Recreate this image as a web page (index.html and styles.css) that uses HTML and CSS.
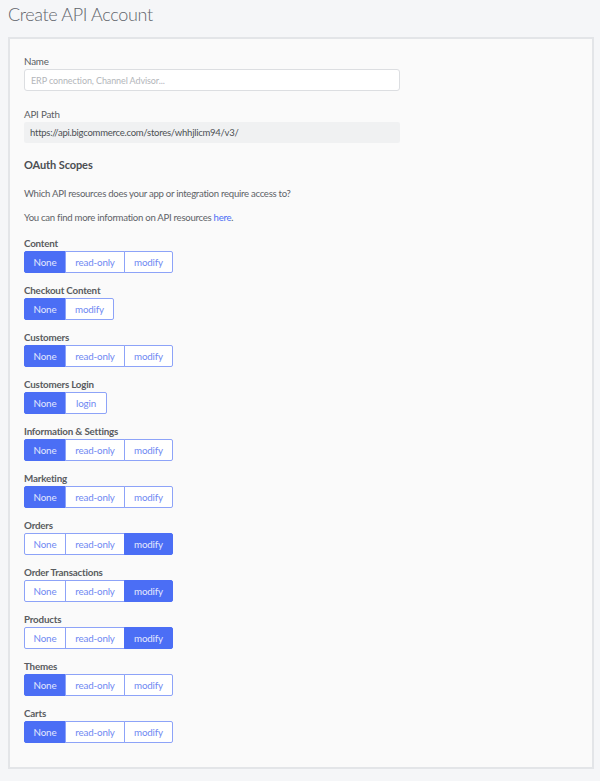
FILE: index.html
```html
<!DOCTYPE html>
<html>
<head>
<meta charset="utf-8">
<link rel="stylesheet" href="styles.css">
</head>
<body>
<h1 class="title">Create API Account</h1>
<div class="panel">
  <div class="field">
    <div class="label">Name</div>
    <input class="input" type="text" placeholder="ERP connection, Channel Advisor...">
  </div>
  <div class="field">
    <div class="label">API Path</div>
    <div class="path">https://api.bigcommerce.com/stores/whhjlicm94/v3/</div>
  </div>
  <h2 class="heading">OAuth Scopes</h2>
  <p class="text t1">Which API resources does your app or integration require access to?</p>
  <p class="text t2">You can find more information on API resources <a class="link" href="#">here</a>.</p>

  <div class="scope"><div class="slabel">Content</div><div class="group"><span class="btn w-none on">None</span><span class="btn w-ro">read-only</span><span class="btn w-mod">modify</span></div></div>
  <div class="scope"><div class="slabel">Checkout Content</div><div class="group"><span class="btn w-none on">None</span><span class="btn w-mod">modify</span></div></div>
  <div class="scope"><div class="slabel">Customers</div><div class="group"><span class="btn w-none on">None</span><span class="btn w-ro">read-only</span><span class="btn w-mod">modify</span></div></div>
  <div class="scope"><div class="slabel">Customers Login</div><div class="group"><span class="btn w-none on">None</span><span class="btn w-login">login</span></div></div>
  <div class="scope"><div class="slabel">Information &amp; Settings</div><div class="group"><span class="btn w-none on">None</span><span class="btn w-ro">read-only</span><span class="btn w-mod">modify</span></div></div>
  <div class="scope"><div class="slabel">Marketing</div><div class="group"><span class="btn w-none on">None</span><span class="btn w-ro">read-only</span><span class="btn w-mod">modify</span></div></div>
  <div class="scope"><div class="slabel">Orders</div><div class="group"><span class="btn w-none">None</span><span class="btn w-ro">read-only</span><span class="btn w-mod on">modify</span></div></div>
  <div class="scope"><div class="slabel">Order Transactions</div><div class="group"><span class="btn w-none">None</span><span class="btn w-ro">read-only</span><span class="btn w-mod on">modify</span></div></div>
  <div class="scope"><div class="slabel">Products</div><div class="group"><span class="btn w-none">None</span><span class="btn w-ro">read-only</span><span class="btn w-mod on">modify</span></div></div>
  <div class="scope"><div class="slabel">Themes</div><div class="group"><span class="btn w-none on">None</span><span class="btn w-ro">read-only</span><span class="btn w-mod">modify</span></div></div>
  <div class="scope last"><div class="slabel">Carts</div><div class="group"><span class="btn w-none on">None</span><span class="btn w-ro">read-only</span><span class="btn w-mod">modify</span></div></div>
</div>
</body>
</html>
```
FILE: styles.css
```css
* { box-sizing: border-box; }
html, body { margin: 0; padding: 0; }
body {
  background: #f5f6f8;
  font-family: "Lato", "Open Sans", sans-serif;
  color: #5d6166;
  padding: 0 6px 0 8px;
  height: 781px;
  overflow: hidden;
}
.title {
  margin: 0;
  height: 37px;
  font-size: 18px;
  font-weight: 300;
  letter-spacing: -0.35px;
  line-height: 28px;
  color: #5f646b;
}
.panel {
  background: #fafafa;
  border: 2px solid #e3e5e8;
  padding: 14px 14px 24px 14px;
}
.field { margin-bottom: 15px; }
.label, .slabel {
  font-size: 9.8px;
  line-height: 16px;
  height: 16px;
  letter-spacing: -0.2px;
}
.label { color: #5a5e63; }
.slabel { font-weight: 700; color: #595c60; }
.input {
  display: block;
  width: 376px;
  height: 22px;
  border: 1px solid #dcdee1;
  border-radius: 3px;
  background: #fff;
  padding: 0 6px;
  font-family: inherit;
  font-size: 9px;
  letter-spacing: -0.1px;
  color: #333;
}
.input::placeholder { color: #b3b6ba; }
.path {
  width: 376px;
  height: 21px;
  background: #f0f1f2;
  border-radius: 2px;
  font-size: 9.5px;
  letter-spacing: -0.25px;
  line-height: 21px;
  padding-left: 6px;
  color: #4c5054;
}
.heading {
  margin: -3px 0 0 0;
  font-size: 11px;
  font-weight: 700;
  letter-spacing: -0.1px;
  line-height: 20px;
  color: #4b4e52;
}
.text {
  margin: 0;
  font-size: 9.6px;
  letter-spacing: -0.28px;
  line-height: 16px;
  color: #5f6368;
}
.t1 { margin-top: 11px; }
.t2 { margin-top: 8px; margin-bottom: 9px; }
.link { color: #4b6ef5; text-decoration: none; }
.scope { margin-bottom: 9px; }
.scope.last { margin-bottom: 0; }
.group { display: flex; height: 22px; }
.btn {
  display: flex;
  align-items: center;
  justify-content: center;
  height: 22px;
  border: 1px solid #8da3f8;
  background: #fff;
  color: #6f89f2;
  font-size: 9.8px;
  letter-spacing: -0.15px;
  margin-left: -1px;
}
.btn:first-child { margin-left: 0; border-radius: 2px 0 0 2px; }
.btn:last-child { border-radius: 0 2px 2px 0; }
.btn.on { background: #4b6ef5; border-color: #4b6ef5; color: #e3e8fd; }
.w-none { width: 42px; }
.w-ro { width: 60px; }
.w-mod { width: 49px; }
.w-login { width: 42px; }
```
